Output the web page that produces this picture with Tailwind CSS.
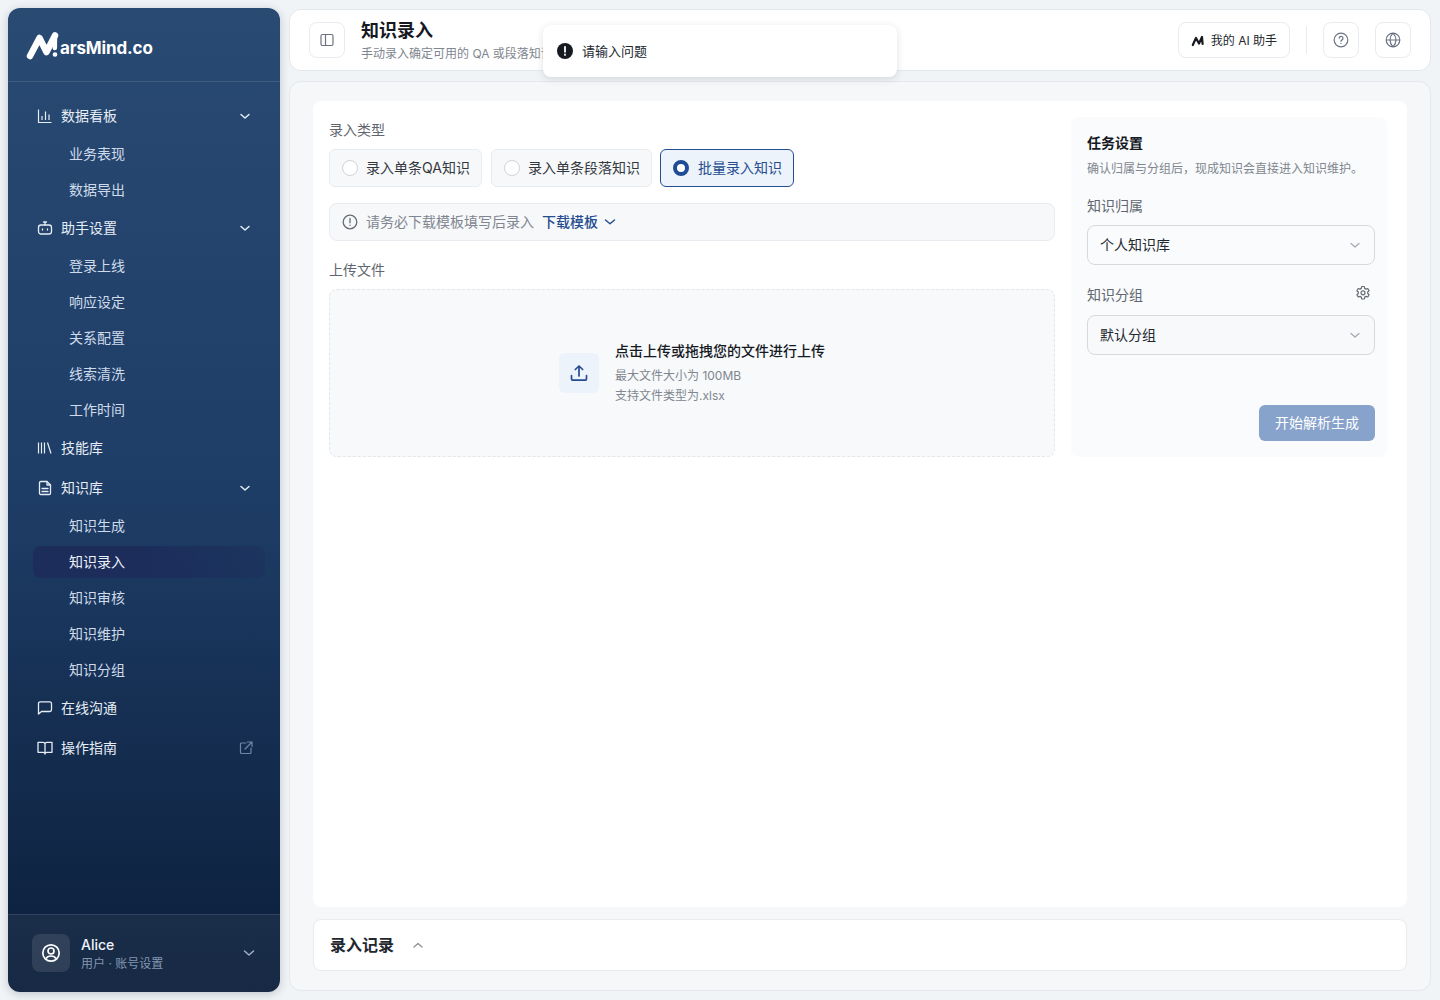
<!DOCTYPE html>
<html lang="zh-CN">
<head>
  <meta charset="UTF-8">
  <title>知识录入</title>
  <script src="https://cdn.jsdelivr.net/npm/@tailwindcss/browser@4"></script>
</head>
<body class="h-[1000px] w-[1440px] overflow-hidden bg-[#f1f4f6] font-['Inter','Noto_Sans_CJK_SC',sans-serif] text-[#1f2329]">
<div class="relative flex h-full">

  <!-- sidebar -->
  <aside class="m-2 mr-0 flex h-[984px] w-[272px] shrink-0 flex-col rounded-xl bg-gradient-to-b from-[#294a73] via-[#1e3d66] to-[#0b1e3a] shadow-[0_2px_10px_rgba(15,34,64,0.22)]">
    <div class="flex h-[74px] items-center border-b border-white/10 pl-[18px]">
      <svg class="mt-[2px] h-[30px] w-[34px]" viewBox="0 0 34 30" fill="none">
        <path d="M4 25 13.500 7 20.500 21 29 4.500" stroke="#fff" stroke-width="6.500" stroke-linecap="round" stroke-linejoin="round"/>
        <path d="M29 4.500 28.800 17" stroke="#fff" stroke-width="4.500" stroke-linecap="round"/>
        <circle cx="29" cy="23.500" r="2.300" fill="#fff"/>
      </svg>
      <span class="mt-[8px] text-[17px] font-bold tracking-[-0.15px] text-white">arsMind.co</span>
    </div>

    <nav class="flex-1 px-[25px] pt-[14px] text-sm text-[#cfdbea]">
      <div class="flex h-10 items-center justify-between pl-1 pr-[2px] text-[#e6edf5]">
        <span class="flex items-center gap-2">
          <svg class="h-4 w-4" viewBox="0 0 16 16" fill="none" stroke="currentColor" stroke-width="1.2"><path d="M1.500 1.500v13h13M5 12V8M8.500 12V3.500M12 12V6.500"/></svg>
          数据看板
        </span>
        <svg class="h-4 w-4" viewBox="0 0 16 16" fill="none" stroke="currentColor" stroke-width="1.5"><path d="m4 6.500 4 3.500 4-3.500" stroke-linecap="round" stroke-linejoin="round"/></svg>
      </div>
      <div class="flex h-9 items-center pl-9">业务表现</div>
      <div class="flex h-9 items-center pl-9">数据导出</div>

      <div class="flex h-10 items-center justify-between pl-1 pr-[2px] text-[#e6edf5]">
        <span class="flex items-center gap-2">
          <svg class="h-4 w-4" viewBox="0 0 16 16" fill="none" stroke="currentColor" stroke-width="1.3"><rect x="1.500" y="5" width="13" height="9" rx="2.500"/><path d="M8 5V2M6.500 2h3M5.500 9v1M10.500 9v1" stroke-linecap="round"/></svg>
          助手设置
        </span>
        <svg class="h-4 w-4" viewBox="0 0 16 16" fill="none" stroke="currentColor" stroke-width="1.5"><path d="m4 6.500 4 3.500 4-3.500" stroke-linecap="round" stroke-linejoin="round"/></svg>
      </div>
      <div class="flex h-9 items-center pl-9">登录上线</div>
      <div class="flex h-9 items-center pl-9">响应设定</div>
      <div class="flex h-9 items-center pl-9">关系配置</div>
      <div class="flex h-9 items-center pl-9">线索清洗</div>
      <div class="flex h-9 items-center pl-9">工作时间</div>

      <div class="flex h-10 items-center pl-1 pr-[2px] text-[#e6edf5]">
        <span class="flex items-center gap-2">
          <svg class="h-4 w-4" viewBox="0 0 16 16" fill="none" stroke="currentColor" stroke-width="1.2"><path d="M1.500 2.500v11M4.500 2.500v11M7.500 2.500v11M10.500 2.500l3.500 11"/></svg>
          技能库
        </span>
      </div>

      <div class="flex h-10 items-center justify-between pl-1 pr-[2px] text-[#e6edf5]">
        <span class="flex items-center gap-2">
          <svg class="h-4 w-4" viewBox="0 0 16 16" fill="none" stroke="currentColor" stroke-width="1.3" stroke-linejoin="round"><path d="M2.500 2.800c0-.7.500-1.300 1.300-1.300H10l3.500 3.500v8.200c0 .7-.6 1.300-1.300 1.300H3.800c-.8 0-1.300-.6-1.300-1.300z"/><path d="M10 1.500V5h3.500M5 8.500h6M5 11.500h6" stroke-linecap="round"/></svg>
          知识库
        </span>
        <svg class="h-4 w-4" viewBox="0 0 16 16" fill="none" stroke="currentColor" stroke-width="1.5"><path d="m4 6.500 4 3.500 4-3.500" stroke-linecap="round" stroke-linejoin="round"/></svg>
      </div>
      <div class="flex h-9 items-center pl-9">知识生成</div>
      <div class="-mr-[10px] h-9 py-0.5">
        <div class="flex h-8 items-center rounded-lg bg-gradient-to-r from-[#1c2d5c] via-[#1c2d5c] to-[#1c2d5c]/40 pl-9 text-[#eef3f9]">知识录入</div>
      </div>
      <div class="flex h-9 items-center pl-9">知识审核</div>
      <div class="flex h-9 items-center pl-9">知识维护</div>
      <div class="flex h-9 items-center pl-9">知识分组</div>

      <div class="flex h-10 items-center pl-1 pr-[2px] text-[#e6edf5]">
        <span class="flex items-center gap-2">
          <svg class="h-4 w-4" viewBox="0 0 16 16" fill="none" stroke="currentColor" stroke-width="1.3" stroke-linejoin="round"><path d="M1.500 14V3.500c0-1 .8-1.700 1.700-1.700h9.600c.9 0 1.700.7 1.700 1.700v6.300c0 1-.8 1.700-1.700 1.700H4.500z"/></svg>
          在线沟通
        </span>
      </div>
      <div class="flex h-10 items-center justify-between pl-1 pr-px text-[#e6edf5]">
        <span class="flex items-center gap-2">
          <svg class="h-4 w-4" viewBox="0 0 16 16" fill="none" stroke="currentColor" stroke-width="1.3" stroke-linejoin="round"><path d="M8 4.200C8 3 7 2.300 6 2.300H1v10h5c1 0 2 .6 2 1.700 0-1.100 1-1.700 2-1.700h5v-10h-5C9 2.300 8 3 8 4.200zM8 4.200V14"/></svg>
          操作指南
        </span>
        <svg class="h-4 w-4 text-[#6f87a6]" viewBox="0 0 16 16" fill="none" stroke="currentColor" stroke-width="1.200" stroke-linecap="round" stroke-linejoin="round"><path d="M8 3H3.500A1 1 0 0 0 2.500 4v8.500a1 1 0 0 0 1 1H12a1 1 0 0 0 1-1V8M9.500 2h4.500v4.500M14 2 7 9"/></svg>
      </div>
    </nav>

    <div class="flex h-[78px] items-center rounded-b-xl border-t border-white/10 bg-white/5 pb-px pl-6 pr-[23px]">
      <div class="flex h-[38px] w-[38px] items-center justify-center rounded-lg bg-white/10">
        <svg class="h-[20px] w-[20px]" viewBox="0 0 20 20" fill="none" stroke="#fff" stroke-width="1.700"><circle cx="10" cy="10" r="8.200"/><circle cx="10" cy="8" r="3"/><path d="M5 15.500c1-1.800 2.800-2.500 5-2.500s4 .7 5 2.500"/></svg>
      </div>
      <div class="ml-[11px] flex-1 pt-[2px]">
        <div class="text-sm leading-[18px] font-medium text-[#eef3f9]">Alice</div>
        <div class="mt-[1px] text-xs leading-[18px] text-[#8396b0]">用户 · 账号设置</div>
      </div>
      <svg class="h-4 w-4 text-[#9fb0c6]" viewBox="0 0 16 16" fill="none" stroke="currentColor" stroke-width="1.500"><path d="m3.500 6 4.500 4 4.500-4" stroke-linecap="round" stroke-linejoin="round"/></svg>
    </div>
  </aside>

  <!-- main -->
  <main class="ml-[9px] flex h-full w-[1142px] shrink-0 flex-col pt-[9px] pb-[9px]">
    <header class="flex h-[62px] items-center rounded-xl border border-[#e4e7eb] bg-white pl-[19px] pr-[19px]">
      <button class="flex h-9 w-9 items-center justify-center rounded-lg border border-[#e8ebef]">
        <svg class="h-4 w-4 text-[#6b7280]" viewBox="0 0 16 16" fill="none" stroke="currentColor" stroke-width="1.200"><rect x="2" y="2.500" width="12" height="11" rx="1.500"/><path d="M6.500 2.500v11"/></svg>
      </button>
      <div class="ml-4 flex-1">
        <div class="mt-[1px] text-lg leading-[24px] font-semibold text-[#16191f]">知识录入</div>
        <div class="mt-[2px] text-xs leading-[18px] text-[#80868f]">手动录入确定可用的 QA 或段落知识</div>
      </div>
      <button class="flex h-9 w-[112px] items-center justify-center gap-1.5 rounded-lg border border-[#e8ebef] pt-px text-xs text-[#23272e]">
        <svg class="h-3 w-3.5" viewBox="0 0 14 12" fill="none"><path d="M1.800 10 5 3l3 5.500L11 2l.6 7" stroke="#16191f" stroke-width="2.200" stroke-linecap="round" stroke-linejoin="round"/></svg>
        我的 AI 助手
      </button>
      <div class="mx-4 h-7 w-px bg-[#e8ebef]"></div>
      <button class="flex h-9 w-9 items-center justify-center rounded-lg border border-[#e8ebef]">
        <svg class="h-4 w-4 text-[#6b7280]" viewBox="0 0 16 16" fill="none" stroke="currentColor" stroke-width="1.200" stroke-linecap="round"><circle cx="8" cy="8" r="6.800"/><path d="M6.200 6.200a1.900 1.900 0 1 1 2.800 1.700c-.6.300-1 .7-1 1.400M8 11.300v.1"/></svg>
      </button>
      <button class="ml-4 flex h-9 w-9 items-center justify-center rounded-lg border border-[#e8ebef]">
        <svg class="h-4 w-4 text-[#6b7280]" viewBox="0 0 16 16" fill="none" stroke="currentColor" stroke-width="1.200"><circle cx="8" cy="8" r="6.800"/><path d="M1.200 8h13.600M8 1.200c-4 4-4 9.600 0 13.600M8 1.200c4 4 4 9.600 0 13.600"/></svg>
      </button>
    </header>

    <section class="mt-[10px] flex flex-1 flex-col rounded-xl border border-[#e4e7eb] bg-[#f5f7f9] px-[23px] pt-[19px] pb-[19px]">
      <div class="flex h-[806px] gap-4 rounded-lg bg-white py-4 pl-4 pr-5">
        <div class="w-[726px] shrink-0">
          <div class="mt-[1px] text-sm leading-[24px] text-[#5f6670]">录入类型</div>
          <div class="mt-[7px] flex text-sm text-[#33383f]">
            <div class="flex h-[38px] w-[153px] items-center gap-2 rounded-md border border-[#e8ebef] bg-[#f7f8fa] pl-[12px]">
              <span class="h-4 w-4 rounded-full border-[1.500px] border-[#cfd3d9] bg-white"></span>录入单条QA知识
            </div>
            <div class="ml-[9px] flex h-[38px] w-[161px] items-center gap-2 rounded-md border border-[#e8ebef] bg-[#f7f8fa] pl-[12px]">
              <span class="h-4 w-4 rounded-full border-[1.500px] border-[#cfd3d9] bg-white"></span>录入单条段落知识
            </div>
            <div class="ml-2 flex h-[38px] w-[134px] items-center gap-[9px] rounded-md border border-[#254d8f] bg-[#edf3fb] pl-[12px] text-[#254d8f]">
              <span class="h-4 w-4 rounded-full border-[4.500px] border-[#1f4b96] bg-white"></span>批量录入知识
            </div>
          </div>
          <div class="mt-4 flex h-[38px] items-center rounded-lg border border-[#e8ebef] bg-[#f7f8fa] pl-[12px] text-sm text-[#80868f]">
            <svg class="h-4 w-4 text-[#666c75]" viewBox="0 0 16 16" fill="none" stroke="currentColor" stroke-width="1.300" stroke-linecap="round"><circle cx="8" cy="8" r="6.800"/><path d="M8 4.500v4.300M8 11.200v.1"/></svg>
            <span class="ml-2">请务必下载模板填写后录入</span>
            <span class="ml-2 font-medium text-[#254d8f]">下载模板</span>
            <svg class="ml-[5px] h-3.5 w-3.5 text-[#254d8f]" viewBox="0 0 14 14" fill="none" stroke="currentColor" stroke-width="1.500"><path d="m2.500 5 4.500 3.800L11.500 5" stroke-linecap="round" stroke-linejoin="round"/></svg>
          </div>
          <div class="mt-[17px] text-sm leading-[24px] text-[#5f6670]">上传文件</div>
          <div class="mt-[7px] flex h-[168px] items-center justify-center gap-4 rounded-lg border border-dashed border-[#e3e6ea] bg-[#f7f9fb]">
            <div class="flex h-10 w-10 items-center justify-center rounded-md bg-[#edf3fb]">
              <svg class="h-5 w-5 text-[#254d8f]" viewBox="0 0 20 20" fill="none" stroke="currentColor" stroke-width="1.700" stroke-linecap="round" stroke-linejoin="round"><path d="M10 13V3M6.300 6.500 10 3l3.700 3.500M2.500 12.500v3c0 1 .7 1.700 1.700 1.700h11.600c1 0 1.700-.7 1.700-1.700v-3"/></svg>
            </div>
            <div>
              <div class="text-sm leading-[20px] font-medium text-[#16191f]">点击上传或拖拽您的文件进行上传</div>
              <div class="mt-[5px] text-xs leading-[20px] text-[#80868f]">最大文件大小为 100MB</div>
              <div class="text-xs leading-[20px] text-[#80868f]">支持文件类型为.xlsx</div>
            </div>
          </div>
        </div>

        <div class="h-[340px] w-[316px] shrink-0 rounded-lg bg-[#fafbfc] pl-4 pr-3 pt-[15px]">
          <div class="text-sm leading-[22px] font-semibold text-[#16191f]">任务设置</div>
          <div class="mt-[5px] text-xs leading-[20px] text-[#80868f]">确认归属与分组后，现成知识会直接进入知识维护。</div>
          <div class="mt-[17px] text-sm leading-[20px] text-[#5f6670]">知识归属</div>
          <div class="mt-[9px] flex h-10 items-center justify-between rounded-lg border border-[#d6d9de] bg-[#fafbfc] px-3 text-sm text-[#23272e]">
            个人知识库
            <svg class="h-3.5 w-3.5 text-[#a6abb3]" viewBox="0 0 14 14" fill="none" stroke="currentColor" stroke-width="1.300"><path d="m3 5.500 4 3.500 4-3.500" stroke-linecap="round" stroke-linejoin="round"/></svg>
          </div>
          <div class="mt-5 flex h-5 items-center justify-between text-sm text-[#5f6670]">
            知识分组
            <svg class="mb-1 mr-[4px] h-4 w-4 text-[#666c75]" viewBox="0 0 16 16" fill="none" stroke="currentColor" stroke-width="1.200" stroke-linejoin="round"><path d="m6.700 1.500h2.600l.4 1.900 1.300.7 1.800-.6 1.300 2.200-1.400 1.300v1.500l1.400 1.300-1.300 2.200-1.800-.6-1.300.7-.4 1.900H6.700l-.4-1.900-1.300-.7-1.800.6-1.300-2.200 1.400-1.300V7l-1.400-1.300 1.300-2.200 1.800.6 1.300-.7z"/><circle cx="8" cy="7.800" r="2"/></svg>
          </div>
          <div class="mt-[10px] flex h-10 items-center justify-between rounded-lg border border-[#d6d9de] bg-[#f7f9fb] px-3 text-sm text-[#23272e]">
            默认分组
            <svg class="h-3.5 w-3.5 text-[#a6abb3]" viewBox="0 0 14 14" fill="none" stroke="currentColor" stroke-width="1.300"><path d="m3 5.500 4 3.500 4-3.500" stroke-linecap="round" stroke-linejoin="round"/></svg>
          </div>
          <div class="mt-[50px] flex justify-end">
            <button class="h-9 w-[116px] rounded-md bg-[#88a3cb] text-sm text-white">开始解析生成</button>
          </div>
        </div>
      </div>

      <div class="mt-3 flex h-[52px] items-center rounded-lg border border-[#e8ebef] bg-white pl-4">
        <span class="text-base font-semibold text-[#23272e]">录入记录</span>
        <svg class="ml-4 h-4 w-4 text-[#8b9098]" viewBox="0 0 16 16" fill="none" stroke="currentColor" stroke-width="1.300"><path d="m4 10 4-3.500 4 3.500" stroke-linecap="round" stroke-linejoin="round"/></svg>
      </div>
    </section>
  </main>

  <!-- toast -->
  <div class="absolute left-[543px] top-[25px] flex h-[52px] w-[354px] items-center gap-[9px] rounded-lg bg-white pl-[14px] text-[13px] text-[#23272e] shadow-[0_2px_8px_rgba(0,0,0,0.12)]">
    <svg class="h-4 w-4" viewBox="0 0 16 16"><circle cx="8" cy="8" r="8" fill="#16191f"/><path d="M8 3.800v5M8 11.300v.6" stroke="#fff" stroke-width="1.800" stroke-linecap="round"/></svg>
    <span class="pt-px">请输入问题</span>
  </div>
</div>
</body>
</html>
